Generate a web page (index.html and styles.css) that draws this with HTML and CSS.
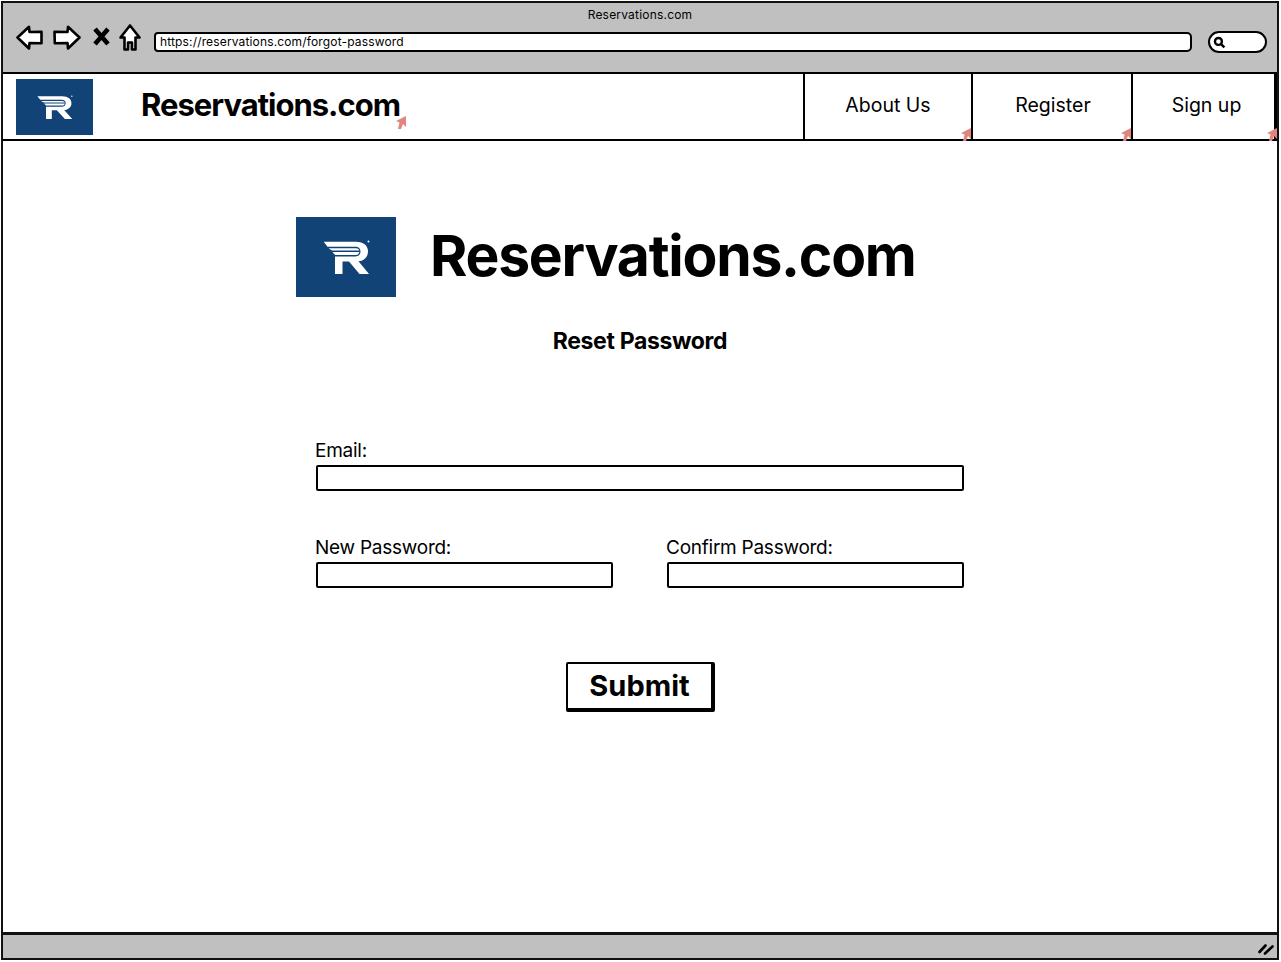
FILE: index.html
```html
<!DOCTYPE html>
<html lang="en">
<head>
<meta charset="utf-8">
<title>Reservations.com</title>
<link rel="stylesheet" href="styles.css">
</head>
<body>
<div class="window">
  <header class="chrome">
    <div class="chrome-title">Reservations.com</div>
    <div class="toolbar">
      <svg class="ic ic-back" viewBox="0 0 27 25"><path d="M1.5 12.5 L13 1.8 L13.5 7 L25.5 6.8 L25.5 18.3 L13.5 18 L13 23.5 Z"/></svg>
      <svg class="ic ic-fwd" viewBox="0 0 28 25"><path d="M26.5 12.5 L15 1.8 L14.5 7 L1.5 6.8 L1.8 18.3 L14.5 18 L15 23.5 Z"/></svg>
      <svg class="ic ic-x" viewBox="0 0 17 19"><path d="M2 2 L15 17 M15 2 L2 17"/></svg>
      <svg class="ic ic-home" viewBox="0 0 22 27"><path d="M11 1.5 L20.5 13.5 L16.5 13.5 L16.5 25.5 L13 25.5 L13 18.5 L9 18.5 L9 25.5 L5.5 25.5 L5.5 13.5 L1.5 13.5 Z"/></svg>
      <div class="url">https://reservations.com/forgot-password</div>
      <div class="search">
        <svg class="search-ic" viewBox="0 0 12 12"><circle cx="5" cy="5" r="3.2"/><path d="M7.5 7.5 L10.5 10.5"/></svg>
      </div>
    </div>
  </header>

  <nav class="nav">
    <svg class="logo logo-sm" viewBox="0 0 100 80" preserveAspectRatio="none"><use href="#r-mark"/></svg>
    <div class="nav-brand">Reservations.com<svg class="link-mark" viewBox="0 0 11 13"><path d="M3 13 L4.500 6.500 L1 5 L11 0 L11 11 L8 8 L6 13 Z"/></svg></div>
    <div class="nav-links">
      <a class="nav-link nav-about">About Us<svg class="link-mark" viewBox="0 0 11 13"><path d="M3 13 L4.500 6.500 L1 5 L11 0 L11 11 L8 8 L6 13 Z"/></svg></a>
      <a class="nav-link nav-register">Register<svg class="link-mark" viewBox="0 0 11 13"><path d="M3 13 L4.500 6.500 L1 5 L11 0 L11 11 L8 8 L6 13 Z"/></svg></a>
      <a class="nav-link nav-signup">Sign up<svg class="link-mark" viewBox="0 0 11 13"><path d="M3 13 L4.500 6.500 L1 5 L11 0 L11 11 L8 8 L6 13 Z"/></svg></a>
    </div>
  </nav>

  <main class="main">
    <div class="brand">
      <svg class="logo logo-lg" viewBox="0 0 100 80">
        <defs>
          <g id="r-mark" fill="#fff">
            <path d="M27.700 24.700 L60 24.700 C68 24.700 72 29 72 34.500 C72 40 68 44 62.500 44.300 L73 57 L63.500 57 L53 44.500 L46.500 44.500 L46.500 57 L39 57 L39 39.500 L59 39.500 C63 39.500 64.500 37 64.500 34.500 C64.500 32 63 29.700 59.500 29.700 L31.500 29.700 Z"/>
            <path d="M32.500 31.300 L60 31.300 C62 31.300 63.300 32.500 63.300 33.500 L36 33.500 Z"/>
            <path d="M36.500 35 L63.300 35 C63.300 36.500 62 38 60 38 L39 38 Z"/>
            <circle cx="72.500" cy="24.500" r="1"/>
          </g>
        </defs>
        <use href="#r-mark"/>
      </svg>
      <div class="brand-name">Reservations.com</div>
    </div>

    <h1 class="heading">Reset Password</h1>

    <form class="form">
      <div class="field">
        <label class="label">Email:</label>
        <div class="input"></div>
      </div>
      <div class="field-row">
        <div class="field">
          <label class="label">New Password:</label>
          <div class="input"></div>
        </div>
        <div class="field">
          <label class="label">Confirm Password:</label>
          <div class="input"></div>
        </div>
      </div>
      <div class="actions">
        <div class="submit">Submit</div>
      </div>
    </form>
  </main>

  <footer class="status">
    <svg class="grip" viewBox="0 0 16 12"><path d="M1.500 9 L7.500 2.500 M7 10.500 L14.500 3.500"/></svg>
  </footer>
</div>
</body>
</html>
```

FILE: styles.css
```css
* { box-sizing: border-box; }

html, body {
  margin: 0;
  height: 100%;
  background: #fff;
  overflow: hidden;
}

body {
  padding: 1px;
  font-family: Inter, Lato, sans-serif;
  font-variant-ligatures: none;
  color: #000;
}

.window {
  width: 1278px;
  height: 959px;
  border: 2px solid #111;
  display: flex;
  flex-direction: column;
  background: #fff;
}

.chrome {
  height: 71px;
  flex: none;
  background: #c0c0c0;
  border-bottom: 2px solid #000;
  position: relative;
}

.chrome-title {
  font-size: 12px;
  line-height: 14px;
  text-align: center;
  padding-top: 5px;
  height: 19px;
  letter-spacing: 0.2px;
}

.toolbar {
  display: flex;
  align-items: flex-start;
  padding-left: 13px;
  height: 30px;
  margin-top: 2px;
}

.ic { display: block; flex: none; fill: #fff; stroke: #000; stroke-width: 2.6; stroke-linejoin: round; }
.ic-back { width: 27px; height: 25px; margin-top: 1px; }
.ic-fwd { width: 28px; height: 25px; margin-top: 1px; margin-left: 10px; }
.ic-x { width: 17px; height: 19px; margin-top: 3px; margin-left: 12px; stroke-width: 4.6; fill: none; }
.ic-home { width: 22px; height: 27px; margin-left: 9px; }

.url {
  width: 1038px;
  height: 20px;
  margin-left: 13px;
  margin-top: 8px;
  background: #fff;
  border: 2px solid #000;
  border-radius: 4px 5px 5px 4px;
  font-size: 12px;
  line-height: 16px;
  padding-left: 4px;
  letter-spacing: 0.15px;
}

.search {
  width: 59px;
  height: 22px;
  margin-left: 16px;
  margin-top: 7px;
  background: #fff;
  border: 2px solid #000;
  border-radius: 11px;
  display: flex;
  align-items: center;
  padding-left: 3px;
}

.search-ic { width: 13px; height: 13px; fill: none; stroke: #000; stroke-width: 2.2; }

.nav {
  height: 67px;
  flex: none;
  display: flex;
  align-items: flex-start;
  border-bottom: 2px solid #000;
  padding-left: 13px;
}

.logo { display: block; flex: none; background: #114377; }
.logo-sm { width: 77px; height: 56px; margin-top: 5px; }
.logo-lg { width: 100px; height: 80px; }

.nav-brand {
  position: relative;
  margin-left: 48px;
  margin-top: 12px;
  font-size: 31px;
  line-height: 38px;
  font-weight: 700;
  letter-spacing: -1px;
}

.nav-brand .link-mark { right: -6px; bottom: -5px; }

.nav-links {
  margin-left: auto;
  display: flex;
  height: 67px;
}

.nav-link {
  position: relative;
  height: 67px;
  display: flex;
  align-items: center;
  justify-content: center;
  padding-bottom: 3px;
  font-size: 19.5px;
  border-left: 2px solid #000;
  border-bottom: 2px solid #000;
}

.nav-about { width: 168px; }
.nav-register { width: 160px; padding-left: 2px; }
.nav-signup { width: 146px; border-right: 3px solid #000; padding-left: 6px; }

.link-mark {
  position: absolute;
  right: 0;
  bottom: -2px;
  width: 11px;
  height: 13px;
  fill: #e28480;
}

.nav-signup .link-mark { right: -3px; }

.main {
  flex: 1;
  padding-top: 76px;
}

.brand {
  display: flex;
  align-items: center;
  margin-left: 293px;
  height: 80px;
}

.brand-name {
  margin-left: 34px;
  font-size: 57px;
  line-height: 76px;
  padding-bottom: 2px;
  font-weight: 700;
  letter-spacing: -1.25px;
}

.heading {
  margin: 28px 0 0;
  height: 32px;
  font-size: 23px;
  line-height: 32px;
  font-weight: 700;
  text-align: center;
  letter-spacing: -0.35px;
}

.form {
  width: 649px;
  margin: 81px 0 0 312px;
}

.field { display: flex; flex-direction: column; }

.label {
  font-size: 19px;
  line-height: 25px;
  height: 27px;
  letter-spacing: -0.25px;
}

.input {
  height: 26px;
  margin-left: 1px;
  background: #fff;
  border: 2px solid #000;
  border-radius: 2px;
}

.field-row {
  display: grid;
  grid-template-columns: 298px 298px;
  column-gap: 53px;
  margin-top: 44px;
}

.actions {
  display: flex;
  justify-content: center;
  margin-top: 74px;
  padding-left: 2px;
}

.submit {
  width: 149px;
  height: 50px;
  background: #fff;
  border: 2px solid #000;
  border-right-width: 4px;
  border-bottom-width: 4px;
  border-radius: 2px;
  font-size: 29px;
  line-height: 43px;
  font-weight: 700;
  text-align: center;
}

.status {
  height: 26px;
  flex: none;
  background: #c0c0c0;
  border-top: 3px solid #111;
  display: flex;
  justify-content: flex-end;
  align-items: flex-end;
  padding: 0 3px 3px 0;
}

.grip { width: 16px; height: 12px; fill: none; stroke: #000; stroke-width: 2.6; stroke-linecap: round; }
```
